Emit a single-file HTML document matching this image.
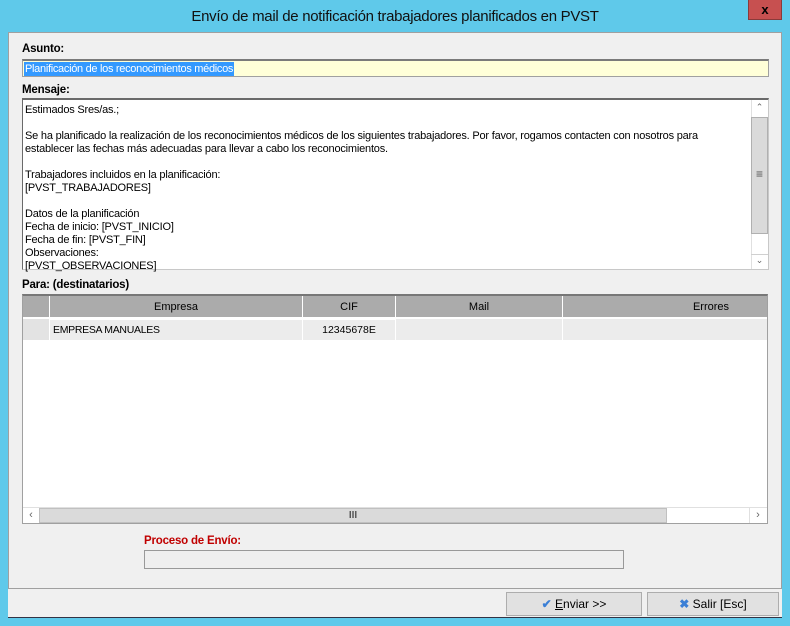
<!DOCTYPE html>
<html><head><meta charset="utf-8"><style>
*{box-sizing:border-box;margin:0;padding:0}
body{width:790px;height:626px;background:#5fc9ea;font-family:"Liberation Sans",sans-serif;font-size:11px;color:#000;position:relative;overflow:hidden}
.a{position:absolute}
.title{left:0;top:1px;width:790px;height:32px;text-align:center;font-size:15px;line-height:32px;color:#111;letter-spacing:-0.3px}
.close{left:748px;top:0;width:34px;height:20px;background:#c75050;border:1px solid #8a3a3a;border-top:none;color:#000;font-weight:bold;font-size:13px;text-align:center;line-height:19px}
.panel{left:8px;top:32px;width:774px;height:557px;background:#f0f0f0;border:1px solid #a0a0a0}
.bottom{left:8px;top:589px;width:774px;height:28px;background:#f0f0f0}
.lbl{font-weight:bold;font-size:11.5px;letter-spacing:-0.2px}
.txt{line-height:13px;white-space:pre;letter-spacing:-0.2px}
.btn{background:#e1e1e1;border:1px solid #adadad;text-align:center;line-height:22px;font-size:12px}
</style></head><body>
<div class="a title">Envío de mail de notificación trabajadores planificados en PVST</div>
<div class="a close">x</div>
<div class="a panel"></div>
<div class="a bottom"></div>
<div class="a" style="left:8px;top:617px;width:774px;height:1px;background:#334"></div>

<div class="a lbl" style="left:22px;top:43px">Asunto:</div>
<div class="a" style="left:22px;top:59px;width:747px;height:18px;background:#ffffd8;border:1px solid #a0a0a0;border-top:2px solid #7a7a7a"></div>
<div class="a" style="left:24px;top:62px;height:14px;background:#3399ff;color:#fff;line-height:14px;padding:0 1px;letter-spacing:-0.3px">Planificación de los reconocimientos médicos</div>

<div class="a lbl" style="left:22px;top:84px">Mensaje:</div>
<div class="a" style="left:22px;top:98px;width:747px;height:172px;background:#fff;border:1px solid #c8c8c8;border-top:2px solid #6a6a6a;border-left:1px solid #6a6a6a"></div>
<div class="a txt" style="left:25px;top:104px">Estimados Sres/as.;

Se ha planificado la realización de los reconocimientos médicos de los siguientes trabajadores. Por favor, rogamos contacten con nosotros para
establecer las fechas más adecuadas para llevar a cabo los reconocimientos.

Trabajadores incluidos en la planificación:
[PVST_TRABAJADORES]

Datos de la planificación
Fecha de inicio: [PVST_INICIO]
Fecha de fin: [PVST_FIN]
Observaciones:
[PVST_OBSERVACIONES]</div>
<div class="a" style="left:751px;top:100px;width:17px;height:169px;background:#fff;border-left:1px solid #e0e0e0"></div>
<div class="a" style="left:751px;top:102px;width:17px;height:14px;text-align:center;color:#666;font-size:9px">&#8963;</div>
<div class="a" style="left:751px;top:117px;width:17px;height:117px;background:#dadada;border:1px solid #b0b0b0;text-align:center;line-height:113px;color:#555;font-size:12px">≡</div>
<div class="a" style="left:751px;top:254px;width:17px;height:14px;text-align:center;color:#666;font-size:9px;border-top:1px solid #d0d0d0">&#8964;</div>

<div class="a lbl" style="left:22px;top:279px">Para: (destinatarios)</div>
<div class="a" style="left:22px;top:294px;width:746px;height:230px;background:#fff;border:1px solid #a0a0a0;border-top:2px solid #777"></div>
<div class="a" style="left:23px;top:296px;width:744px;height:21px;background:#ababab"></div>
<div class="a" style="left:49px;top:296px;width:1px;height:44px;background:#fff"></div>
<div class="a" style="left:302px;top:296px;width:1px;height:44px;background:#fff"></div>
<div class="a" style="left:395px;top:296px;width:1px;height:44px;background:#fff"></div>
<div class="a" style="left:562px;top:296px;width:1px;height:44px;background:#fff"></div>
<div class="a" style="left:50px;top:297px;width:252px;line-height:21px;text-align:center">Empresa</div>
<div class="a" style="left:303px;top:297px;width:92px;line-height:21px;text-align:center">CIF</div>
<div class="a" style="left:396px;top:297px;width:166px;line-height:21px;text-align:center">Mail</div>
<div class="a" style="left:563px;top:297px;width:204px;line-height:21px;text-align:right;padding-right:38px">Errores</div>
<div class="a" style="left:23px;top:318px;width:744px;height:1px;background:#fff"></div>
<div class="a" style="left:23px;top:319px;width:26px;height:21px;background:#e3e3e3"></div>
<div class="a" style="left:50px;top:320px;width:252px;height:20px;background:#ececec;line-height:20px;padding-left:3px;font-size:10.5px;letter-spacing:-0.3px">EMPRESA MANUALES</div>
<div class="a" style="left:303px;top:320px;width:92px;height:20px;background:#ececec;line-height:20px;text-align:center;font-size:10.5px">12345678E</div>
<div class="a" style="left:396px;top:319px;width:166px;height:21px;background:#ececec"></div>
<div class="a" style="left:563px;top:319px;width:204px;height:21px;background:#ececec"></div>
<div class="a" style="left:23px;top:507px;width:744px;height:16px;background:#fff;border-top:1px solid #e0e0e0"></div>
<div class="a" style="left:23px;top:508px;width:16px;height:15px;text-align:center;color:#666;line-height:15px">‹</div>
<div class="a" style="left:39px;top:508px;width:628px;height:15px;background:#dadada;border:1px solid #c0c0c0;text-align:center;line-height:13px;color:#555;font-size:10px;font-weight:bold">III</div>
<div class="a" style="left:749px;top:508px;width:17px;height:15px;text-align:center;color:#666;line-height:15px;border-left:1px solid #e0e0e0">›</div>

<div class="a lbl" style="left:144px;top:535px;color:#c00000">Proceso de Envío:</div>
<div class="a" style="left:144px;top:550px;width:480px;height:19px;background:#efefef;border:1px solid #999"></div>

<div class="a btn" style="left:506px;top:592px;width:136px;height:24px"><span style="color:#3b7fd6;font-weight:bold">✔</span> <u>E</u>nviar &gt;&gt;</div>
<div class="a btn" style="left:647px;top:592px;width:132px;height:24px"><span style="color:#3b7fd6;font-weight:bold">✖</span> Salir [Esc]</div>
</body></html>
